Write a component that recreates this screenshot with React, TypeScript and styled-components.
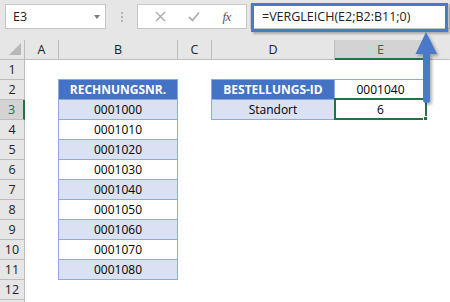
import React from "react";
import styled, { createGlobalStyle, css } from "styled-components";

const GlobalStyle = createGlobalStyle`
  html, body { margin: 0; padding: 0; background: #ffffff; }
  body { font-family: "Open Sans", "Liberation Sans", sans-serif; }
`;

const BLUE = "#4472c4";
const BAND = "#d9e1f2";
const TBORDER = "#8ea9db";
const GREEN = "#217346";
const HEAD_BG = "#e6e6e6";
const HEAD_LINE = "#bcbcbc";
const ANNOT = "#4a79c9";

const Page = styled.div`
  position: relative;
  width: 450px;
  height: 302px;
  overflow: hidden;
  background: #fff;
`;

const Toolbar = styled.div`
  height: 40px;
  box-sizing: border-box;
  background: ${HEAD_BG};
  display: flex;
  align-items: flex-start;
  padding: 4px 0 0 5px;
`;

const Box = styled.div`
  height: 25px;
  box-sizing: border-box;
  background: #fff;
  border: 1px solid #c6c6c6;
  display: flex;
  align-items: center;
`;

const NameBox = styled(Box)`
  width: 101px;
  justify-content: space-between;
  padding: 0 5px 0 7px;
  font-size: 12.5px;
  color: #222;
`;

const Caret = styled.span`
  width: 0;
  height: 0;
  border-left: 3.5px solid transparent;
  border-right: 3.5px solid transparent;
  border-top: 4px solid #7a7a7a;
`;

const Grip = styled.div`
  width: 31px;
  height: 25px;
  display: flex;
  flex-direction: column;
  align-items: center;
  justify-content: center;
  gap: 2px;
`;

const GripDot = styled.span`
  width: 2px;
  height: 2px;
  background: #b4b4b4;
`;

const FxBox = styled(Box)`
  width: 110px;
  justify-content: space-around;
  padding: 0 4px 0 6px;
`;

const FxLabel = styled.span`
  font-family: "Liberation Serif", "DejaVu Serif", serif;
  font-style: italic;
  font-size: 13px;
  color: #555;
  letter-spacing: -0.5px;
`;

const FormulaBar = styled(Box)`
  flex: 1;
  margin-left: 3px;
  padding-left: 11px;
  font-size: 12.5px;
  color: #222;
  white-space: nowrap;
`;

const Sheet = styled.div`
  display: grid;
  grid-template-columns: 25px 34px 119px 34px 123px 92px 1fr;
  grid-auto-rows: 20px;
`;

const HeaderCell = styled.div<{ $selected?: boolean; $open?: boolean }>`
  position: relative;
  box-sizing: border-box;
  background: ${HEAD_BG};
  border-bottom: 1px solid ${HEAD_LINE};
  border-right: 1px solid ${(p) => (p.$open ? HEAD_BG : HEAD_LINE)};
  display: flex;
  align-items: center;
  justify-content: center;
  font-size: 12.5px;
  color: #222;
  ${(p) =>
    p.$selected &&
    css`
      background: #d3d3d3;
      color: ${GREEN};
      border-bottom: 2px solid ${GREEN};
    `}
`;

const CornerMark = styled.span`
  position: absolute;
  right: 3px;
  bottom: 4px;
  width: 0;
  height: 0;
  border-left: 12px solid transparent;
  border-bottom: 12px solid #b8b8b8;
`;

const RowHead = styled.div<{ $selected?: boolean }>`
  box-sizing: border-box;
  background: ${HEAD_BG};
  border-bottom: 1px solid ${HEAD_LINE};
  border-right: 1px solid ${HEAD_LINE};
  display: flex;
  align-items: center;
  justify-content: center;
  font-size: 12.5px;
  color: #222;
  ${(p) =>
    p.$selected &&
    css`
      background: #d3d3d3;
      color: ${GREEN};
      border-right: 2px solid ${GREEN};
    `}
`;

type Kind = "head" | "band" | "plain" | "blank";

const Cell = styled.div<{ $kind: Kind; $edgeTop?: boolean; $edgeLeft?: boolean }>`
  position: relative;
  box-sizing: border-box;
  display: flex;
  align-items: center;
  justify-content: center;
  font-size: 12px;
  color: #000;
  white-space: nowrap;
  background: ${(p) => (p.$kind === "head" ? BLUE : p.$kind === "band" ? BAND : "#fff")};
  ${(p) =>
    p.$kind === "head" &&
    css`
      color: #fff;
      font-weight: 700;
    `}
  ${(p) =>
    p.$kind !== "blank" &&
    css`
      border-right: 1px solid ${TBORDER};
      border-bottom: 1px solid ${TBORDER};
      box-shadow: ${[
        p.$edgeTop ? `0 -1px 0 ${TBORDER}` : null,
        p.$edgeLeft ? `-1px 0 0 ${TBORDER}` : null,
        p.$edgeTop && p.$edgeLeft ? `-1px -1px 0 ${TBORDER}` : null,
      ]
        .filter(Boolean)
        .join(", ") || "none"};
    `}
`;

const Selection = styled.span`
  position: absolute;
  top: -2px;
  left: -1px;
  right: -1px;
  bottom: -1px;
  border: 2px solid ${GREEN};
  pointer-events: none;
`;

const FillHandle = styled.span`
  position: absolute;
  right: -3px;
  bottom: -3px;
  width: 5px;
  height: 5px;
  background: ${GREEN};
  border: 1px solid #fff;
  border-right: none;
  border-bottom: none;
`;

const Highlight = styled.div`
  position: absolute;
  left: 251px;
  top: 3px;
  width: 197px;
  height: 29px;
  box-sizing: border-box;
  border: 3px solid ${ANNOT};
  box-shadow: 2px 2px 2px rgba(0, 0, 0, 0.25);
  pointer-events: none;
`;

const ArrowSvg = styled.svg`
  position: absolute;
  left: 405px;
  top: 26px;
  width: 40px;
  height: 82px;
  filter: drop-shadow(2px 2px 1.5px rgba(0, 0, 0, 0.3));
`;

const columns = ["A", "B", "C", "D", "E", ""];

type CellSpec = { kind: Kind; text?: string; top?: boolean; left?: boolean; selected?: boolean };

function cellFor(row: number, col: number): CellSpec {
  if (col === 1 && row >= 2 && row <= 11) {
    if (row === 2) return { kind: "head", text: "RECHNUNGSNR.", top: true, left: true };
    const val = String(1000 + (row - 3) * 10).padStart(7, "0");
    return { kind: row % 2 === 1 ? "band" : "plain", text: val, left: true };
  }
  if (col === 3 && row === 2) return { kind: "head", text: "BESTELLUNGS-ID", top: true, left: true };
  if (col === 4 && row === 2) return { kind: "plain", text: "0001040", top: true };
  if (col === 3 && row === 3) return { kind: "band", text: "Standort", left: true };
  if (col === 4 && row === 3) return { kind: "plain", text: "6", selected: true };
  return { kind: "blank" };
}

// rows 1–12 are fully visible; a 13th row only peeks in at the bottom edge
const rows = Array.from({ length: 13 }, (_, i) => i + 1);

export default function App() {
  return (
    <>
      <GlobalStyle />
      <Page>
        <Toolbar>
          <NameBox>
            <span>E3</span>
            <Caret />
          </NameBox>
          <Grip>
            <GripDot />
            <GripDot />
            <GripDot />
          </Grip>
          <FxBox>
            <svg width="11" height="11" viewBox="0 0 11 11">
              <path d="M1 1 L10 10 M10 1 L1 10" stroke="#a9a9a9" strokeWidth="1.4" fill="none" />
            </svg>
            <svg width="12" height="11" viewBox="0 0 12 11">
              <path d="M1 6 L4.5 9.5 L11 1.5" stroke="#b0b0b0" strokeWidth="1.8" fill="none" />
            </svg>
            <FxLabel>fx</FxLabel>
          </FxBox>
          <FormulaBar>=VERGLEICH(E2;B2:B11;0)</FormulaBar>
        </Toolbar>
        <Sheet>
          <HeaderCell>
            <CornerMark />
          </HeaderCell>
          {columns.map((c, i) => (
            <HeaderCell key={i} $selected={c === "E"} $open={c === ""}>
              {c}
            </HeaderCell>
          ))}
          {rows.map((r) => (
            <React.Fragment key={r}>
              <RowHead $selected={r === 3}>{r <= 12 ? r : ""}</RowHead>
              {columns.map((_, ci) => {
                const spec = cellFor(r, ci);
                return (
                  <Cell key={ci} $kind={spec.kind} $edgeTop={spec.top} $edgeLeft={spec.left}>
                    {spec.text}
                    {spec.selected && (
                      <>
                        <Selection />
                        <FillHandle />
                      </>
                    )}
                  </Cell>
                );
              })}
            </React.Fragment>
          ))}
        </Sheet>
        <Highlight />
        <ArrowSvg viewBox="0 0 40 82">
          <path
            d="M21 6 L32 28 L25 28 L25 74 Q25 77 21.5 77 Q18 77 18 74 L18 28 L10.5 28 Z"
            fill={ANNOT}
          />
        </ArrowSvg>
      </Page>
    </>
  );
}
